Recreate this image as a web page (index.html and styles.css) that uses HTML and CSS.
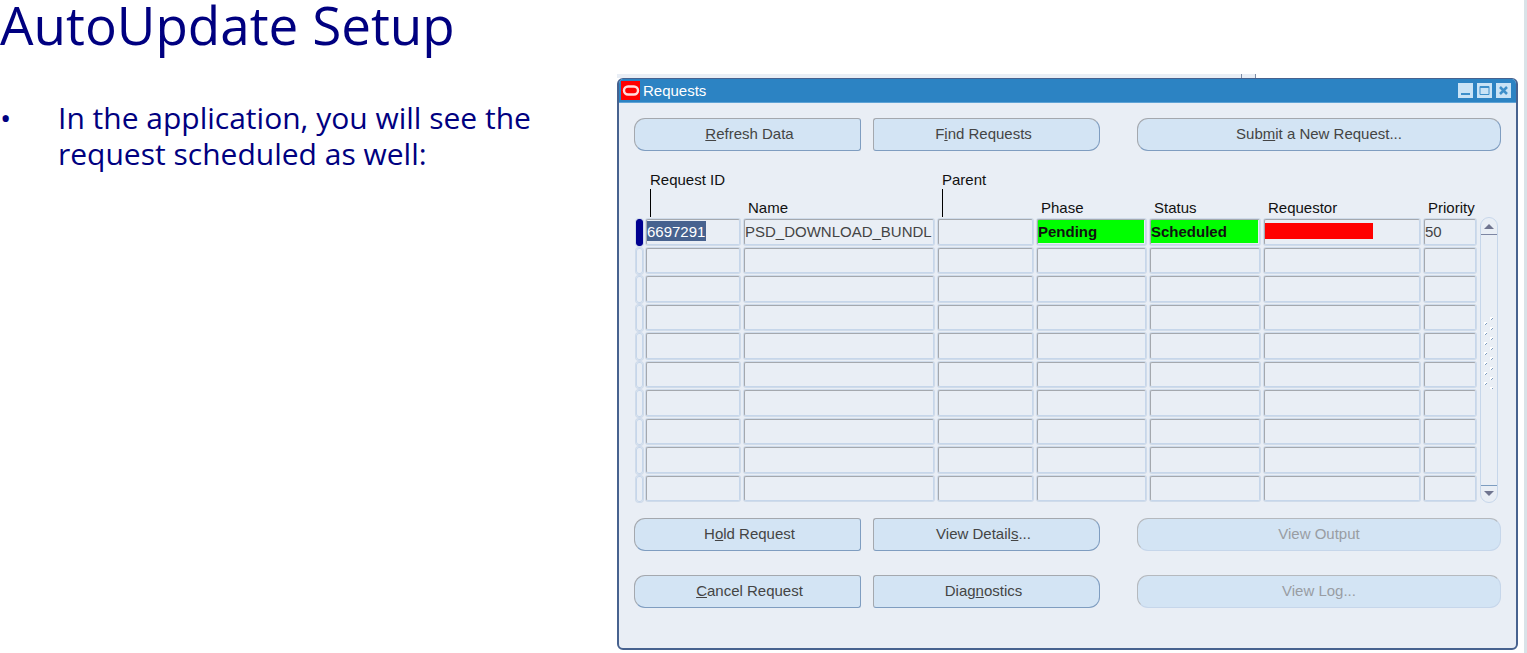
FILE: index.html
```html
<!DOCTYPE html>
<html lang="en">
  <head>
    <meta charset="UTF-8" />
    <meta name="viewport" content="width=device-width, initial-scale=1.0" />
    <title>AutoUpdate Setup</title>
    <link rel="stylesheet" href="styles.css">
  </head>
  <body>
    <main class="slide">
      <section class="notes">
        <h1>AutoUpdate Setup</h1>
        <ul>
          <li>In the application, you will see the request scheduled as well:</li>
        </ul>
      </section>

      <section class="desktop">
        <div class="desktop-edge"><span class="edge-tab"></span></div>
        <div class="window">
          <header class="title-bar">
            <svg class="logo" viewBox="0 0 19 19" aria-hidden="true">
              <rect width="19" height="19" fill="#ff0000" />
              <rect x="3" y="5.5" width="14" height="8" rx="4" fill="none" stroke="#ffdcdc" stroke-width="2.4" />
            </svg>
            <h2>Requests</h2>
            <div class="window-controls">
              <button aria-label="Minimize">
                <svg viewBox="0 0 15 15"><path d="M3 11h9" stroke-width="2" /></svg>
              </button>
              <button aria-label="Maximize">
                <svg viewBox="0 0 15 15"><path d="M3 3.5h9v8h-9z" /><path d="M3 4h9" stroke-width="2" /></svg>
              </button>
              <button aria-label="Close">
                <svg viewBox="0 0 15 15"><path d="M4 4l7 7M11 4l-7 7" stroke-width="2.5" /></svg>
              </button>
            </div>
          </header>

          <div class="window-body">
            <div class="button-row">
              <button class="btn first"><span><u>R</u>efresh Data</span></button>
              <button class="btn last"><span>F<u>i</u>nd Requests</span></button>
              <button class="btn single"><span>Sub<u>m</u>it a New Request...</span></button>
            </div>

            <div class="grid-area">
              <table>
                <colgroup>
                  <col class="col-marker" />
                  <col class="col-id" />
                  <col class="col-name" />
                  <col class="col-parent" />
                  <col class="col-phase" />
                  <col class="col-status" />
                  <col class="col-requestor" />
                  <col class="col-priority" />
                </colgroup>
                <thead>
                  <tr>
                    <td></td>
                    <th class="raised">Request ID<span class="tick"></span></th>
                    <th>Name</th>
                    <th class="raised">Parent<span class="tick"></span></th>
                    <th>Phase</th>
                    <th>Status</th>
                    <th>Requestor</th>
                    <th>Priority</th>
                  </tr>
                </thead>
                <tbody id="requestRows"></tbody>
              </table>
              <div class="scrollbar">
                <button aria-label="Scroll up">
                  <svg viewBox="0 0 16 16"><path d="M3 11l5-5 5 5z" /></svg>
                </button>
                <div class="track">
                  <svg class="grip" viewBox="0 0 12 72" aria-hidden="true">
                    <defs>
                      <pattern id="dots" width="12" height="10" patternUnits="userSpaceOnUse">
                        <path d="M7 0h3v1h-1v1h-1v1h-1zM1 5h3v1h-1v1h-1v1h-1z" fill="#ffffff" />
                        <path d="M9 1h1v1h-1v1h-1v-1h1zM3 6h1v1h-1v1h-1v-1h1z" fill="#7f9dc0" />
                      </pattern>
                    </defs>
                    <rect width="12" height="72" fill="url(#dots)" />
                  </svg>
                </div>
                <button aria-label="Scroll down">
                  <svg viewBox="0 0 16 16"><path d="M3 5h10l-5 5z" /></svg>
                </button>
              </div>
            </div>

            <div class="button-row">
              <button class="btn first"><span>H<u>o</u>ld Request</span></button>
              <button class="btn last"><span>View Detail<u>s</u>...</span></button>
              <button class="btn single" disabled><span>View Output</span></button>
            </div>
            <div class="button-row">
              <button class="btn first"><span><u>C</u>ancel Request</span></button>
              <button class="btn last"><span>Diag<u>n</u>ostics</span></button>
              <button class="btn single" disabled><span>View Log...</span></button>
            </div>
          </div>
        </div>
      </section>
    </main>

    <script>
      const visibleRows = 10;
      const columns = ["Request ID", "Name", "Parent", "Phase", "Status", "Requestor", "Priority"];
      const requests = [
        [
          { value: "6697291", style: "selected" },
          { value: "PSD_DOWNLOAD_BUNDL" },
          { value: "" },
          { value: "Pending", style: "green" },
          { value: "Scheduled", style: "green" },
          { value: "", style: "redacted" },
          { value: "50" },
        ],
      ];

      const tableBody = document.getElementById("requestRows");
      let rows = "";
      for (let i = 0; i < visibleRows; i++) {
        const request = requests[i] || [];
        const cells = columns.map((column, c) => {
          const cell = request[c] || { value: "" };
          return `<td class="${cell.style || ""}"><input type="text" aria-label="${column}, row ${i + 1}" value="${cell.value}" /></td>`;
        });
        rows += `<tr><td class="marker ${i === 0 ? "current" : ""}"></td>${cells.join("")}</tr>`;
      }
      tableBody.innerHTML = rows;
    </script>
  </body>
</html>
```

FILE: styles.css
```css
:root {
  --navy: #000080;
  --frame: #47628f;
  --title: #2c83c3;
  --panel: #e9eef5;
  --button: #d3e4f4;
  --line-dark: #a4a8ae;
  --line-light: #c6d6ea;
  --text: #444444;
}

* {
  margin: 0;
  padding: 0;
  box-sizing: border-box;
}

body {
  background: #ffffff;
  font-family: "Liberation Sans", Arial, sans-serif;
  font-size: 15px;
  line-height: 18px;
}

button,
input {
  font: inherit;
  color: inherit;
  border: none;
  background: none;
}

.slide {
  min-height: 100vh;
  display: grid;
  grid-template-columns: 617fr 901fr;
  padding-right: 6px;
  border-right: 3px solid #d9e3e8;
}

.notes {
  color: var(--navy);
  font-family: "Open Sans", "Noto Sans", sans-serif;
}

.notes h1 {
  font-size: 53px;
  font-weight: 400;
  line-height: 50px;
  white-space: nowrap;
}

.notes ul {
  list-style: none;
  margin-top: 50px;
  padding-right: 60px;
  font-size: 30px;
  line-height: 36px;
}

.notes li {
  display: flex;
}

.notes li::before {
  content: "•";
  flex: 0 0 58px;
}

.desktop {
  padding-top: 74px;
}

.desktop-edge {
  height: 4px;
  margin-right: 262px;
  background: var(--panel);
  display: flex;
  justify-content: flex-end;
}

.edge-tab {
  width: 15px;
  border: solid #7c8ba5;
  border-width: 0 1px;
}

.window {
  background: var(--panel);
  border: 2px solid var(--frame);
  border-top-width: 1px;
  border-radius: 6px;
  overflow: hidden;
}

.title-bar {
  display: flex;
  align-items: center;
  height: 24px;
  padding: 0 5px 0 2px;
  background: var(--title);
  border-bottom: 1px solid #5fa3d6;
  color: #ffffff;
}

.title-bar h2 {
  flex: 1;
  padding-left: 3px;
  font-size: 15px;
  font-weight: 400;
}

.logo {
  width: 19px;
  height: 19px;
}

.window-controls {
  display: flex;
  gap: 4px;
}

.window-controls button {
  width: 15px;
  height: 15px;
  background: #c9e3f6;
}

.window-controls svg {
  display: block;
  fill: none;
  stroke: #3d8fca;
}

.window-body {
  padding: 15px 15px 40px;
}

.button-row {
  display: grid;
  grid-template-columns: 227fr 227fr 389fr;
  gap: 12px;
}

.button-row + .button-row {
  margin-top: 24px;
}

.btn {
  height: 33px;
  padding: 0 0 2px 4px;
  border: 1px solid;
  border-color: var(--line-dark) #7f9dc0 #7f9dc0 var(--line-dark);
  border-radius: 3px;
  background: var(--button);
  color: var(--text);
}

.btn.first {
  border-radius: 11px 3px 3px 11px;
}

.btn.last {
  padding: 0 6px 2px 0;
  border-radius: 3px 11px 11px 3px;
}

.btn.single {
  margin-left: 25px;
  padding: 0 0 2px;
  border-radius: 11px;
}

.btn:disabled {
  border-color: #b5b9be var(--line-light) var(--line-light) #b5b9be;
  color: #999da3;
}

.grid-area {
  display: flex;
  align-items: flex-end;
  gap: 2px;
  margin: 20px 3px 15px 0;
}

table {
  flex: 1;
  width: 100%;
  table-layout: fixed;
  border-collapse: separate;
  border-spacing: 0;
}

.col-marker {
  width: 10px;
}
.col-id {
  width: 98px;
}
.col-parent {
  width: 99px;
}
.col-phase {
  width: 113px;
}
.col-status {
  width: 114px;
}
.col-requestor {
  width: 160px;
}
.col-priority {
  width: 56px;
}

th {
  height: 47px;
  padding: 0 0 1px 6px;
  color: #111111;
  font-weight: 400;
  text-align: left;
  vertical-align: bottom;
  white-space: nowrap;
}

th.raised {
  padding-bottom: 0;
  vertical-align: top;
}

.tick {
  display: block;
  width: 1px;
  height: 28px;
  background: #000000;
}

tbody td {
  height: 28px;
  padding: 1px 4px 4px 3px;
  position: relative;
}

tbody tr:nth-child(odd) td {
  height: 29px;
}

/* sunken frame: dark line on the top left, pale line around it */
tbody td::before {
  content: "";
  position: absolute;
  inset: 1px 2px 2px;
  border: 1px solid;
  border-color: var(--line-dark) var(--line-light) var(--line-light) var(--line-dark);
  border-radius: 2px;
  box-shadow: 0 0 0 1px #cfdbea;
  pointer-events: none;
}

tbody td.marker::before {
  inset: 1px 1px 1px 2px;
  border-color: var(--line-light);
  border-radius: 3px;
}

tbody td.current::before {
  background: #000090;
  border-color: #000090;
}

tbody input {
  display: block;
  width: 100%;
  height: 23px;
  color: var(--text);
  outline: none;
}

td.selected input {
  width: 59px;
  height: 20px;
  background: #47628f;
  color: #ffffff;
}

td.green input {
  background: #00ff00;
  color: #111111;
  font-weight: 700;
}

td.redacted input {
  width: 108px;
  height: 16px;
  background: #ff0000;
}

.scrollbar {
  width: 18px;
  height: 286px;
  display: flex;
  flex-direction: column;
  border: 1px solid var(--line-light);
  border-radius: 9px;
}

.scrollbar button {
  height: 17px;
  border-bottom: 1px solid #7d86a3;
}

.scrollbar button:last-child {
  border-top: 1px solid #7d9dc0;
  border-bottom: none;
}

.scrollbar button svg {
  display: block;
  width: 16px;
  height: 16px;
  fill: #707590;
}

.track {
  flex: 1;
  display: flex;
  align-items: center;
  justify-content: center;
  padding-bottom: 14px;
}

.grip {
  width: 12px;
  height: 72px;
}
```
